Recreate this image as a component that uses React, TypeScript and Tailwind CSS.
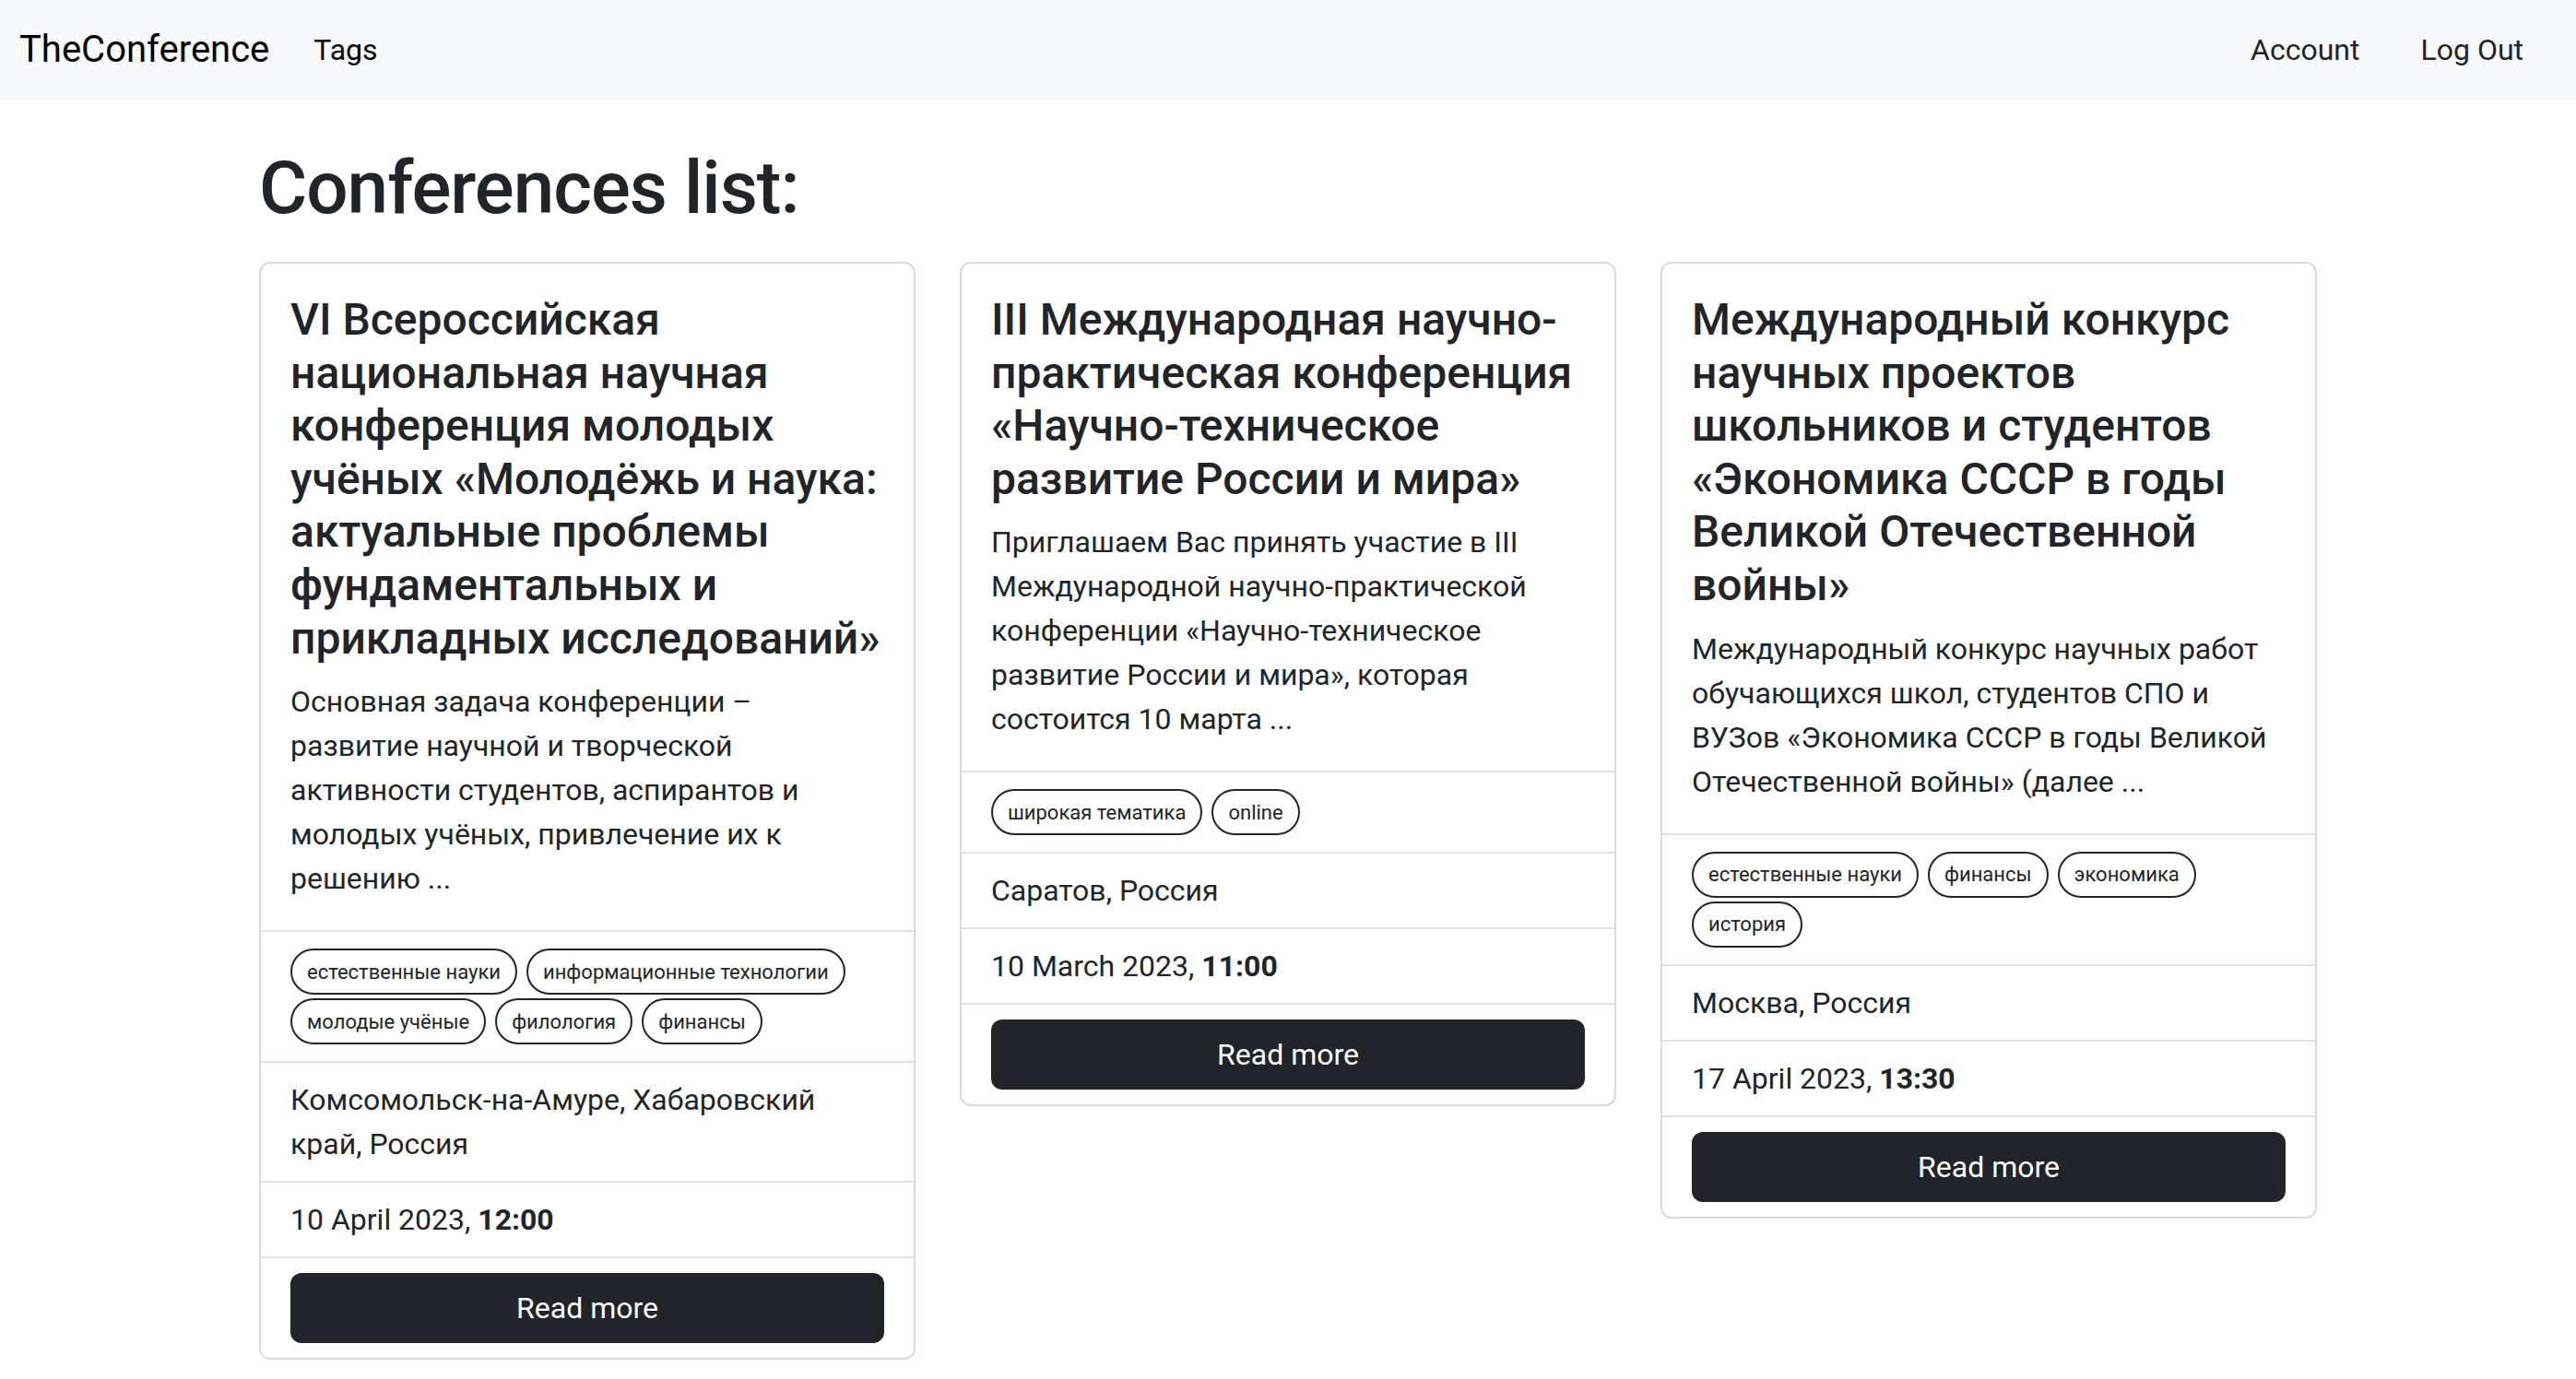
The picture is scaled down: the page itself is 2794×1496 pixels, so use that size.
import React from 'react';

type Conference = {
  title: string;
  description: string;
  tags: string[];
  location: string;
  date: string;
  time: string;
};

const conferences: Conference[] = [
  {
    title:
      'VI Всероссийская национальная научная конференция молодых учёных «Молодёжь и наука: актуальные проблемы фундаментальных и прикладных исследований»',
    description:
      'Основная задача конференции – развитие научной и творческой активности студентов, аспирантов и молодых учёных, привлечение их к решению ...',
    tags: ['естественные науки', 'информационные технологии', 'молодые учёные', 'филология', 'финансы'],
    location: 'Комсомольск-на-Амуре, Хабаровский край, Россия',
    date: '10 April 2023',
    time: '12:00',
  },
  {
    title: 'III Международная научно-практическая конференция «Научно-техническое развитие России и мира»',
    description:
      'Приглашаем Вас принять участие в III Международной научно-практической конференции «Научно-техническое развитие России и мира», которая состоится 10 марта ...',
    tags: ['широкая тематика', 'online'],
    location: 'Саратов, Россия',
    date: '10 March 2023',
    time: '11:00',
  },
  {
    title:
      'Международный конкурс научных проектов школьников и студентов «Экономика СССР в годы Великой Отечественной войны»',
    description:
      'Международный конкурс научных работ обучающихся школ, студентов СПО и ВУЗов «Экономика СССР в годы Великой Отечественной войны» (далее ...',
    tags: ['естественные науки', 'финансы', 'экономика', 'история'],
    location: 'Москва, Россия',
    date: '17 April 2023',
    time: '13:30',
  },
];

const ConferenceCard = ({ conf }: { conf: Conference }) => {
  return (
    <div className="flex flex-col rounded-[12px] border-2 border-[#d9dadb] bg-white">
      <div className="p-[32px]">
        <h4 className="mb-[16px] text-[48px] leading-[57.6px] font-medium">{conf.title}</h4>
        <p className="text-[32px] leading-[48px]">{conf.description}</p>
      </div>

      <div className="border-t-2 border-[#dee2e6] px-[32px] py-[18px]">
        <div className="flex flex-wrap gap-x-[10px] gap-y-[4px]">
          {conf.tags.map((tag) => (
            <span
              key={tag}
              className="flex h-[50px] items-center rounded-full border-2 border-[#212529] px-[16px] text-[22px]">
              {tag}
            </span>
          ))}
        </div>
      </div>

      <div className="border-t-2 border-[#dee2e6] px-[32px] py-[16px] text-[32px] leading-[48px]">
        {conf.location}
      </div>

      <div className="border-t-2 border-[#dee2e6] px-[32px] py-[16px] text-[32px] leading-[48px]">
        {conf.date}, <b className="font-bold">{conf.time}</b>
      </div>

      <div className="border-t-2 border-[#dee2e6] px-[32px] py-[16px]">
        <button className="h-[76px] w-full rounded-[12px] bg-[#212529] text-[32px] text-white">
          Read more
        </button>
      </div>
    </div>
  );
};

export default function App() {
  return (
    <div className="min-h-screen bg-white font-['Roboto','Noto_Sans',sans-serif] text-[#212529]">
      <nav className="flex h-[108px] items-center justify-between bg-[#f8f9fa] pl-[21px] pr-[57px]">
        <div className="flex items-center">
          <span className="mr-[48px] text-[40px] text-black">TheConference</span>
          <a className="text-[32px] text-black">Tags</a>
        </div>
        <div className="flex items-center gap-[66px] text-[32px] text-[#212529]">
          <a>Account</a>
          <a>Log Out</a>
        </div>
      </nav>

      <main className="mx-auto w-[2232px] pb-[32px]">
        <h1 className="mt-[48px] text-[80px] leading-[96px] font-medium tracking-[-1px]">Conferences list:</h1>
        <div className="mt-[32px] grid grid-cols-3 items-start gap-x-[48px]">
          {conferences.map((conf) => (
            <ConferenceCard key={conf.date} conf={conf} />
          ))}
        </div>
      </main>
    </div>
  );
}
